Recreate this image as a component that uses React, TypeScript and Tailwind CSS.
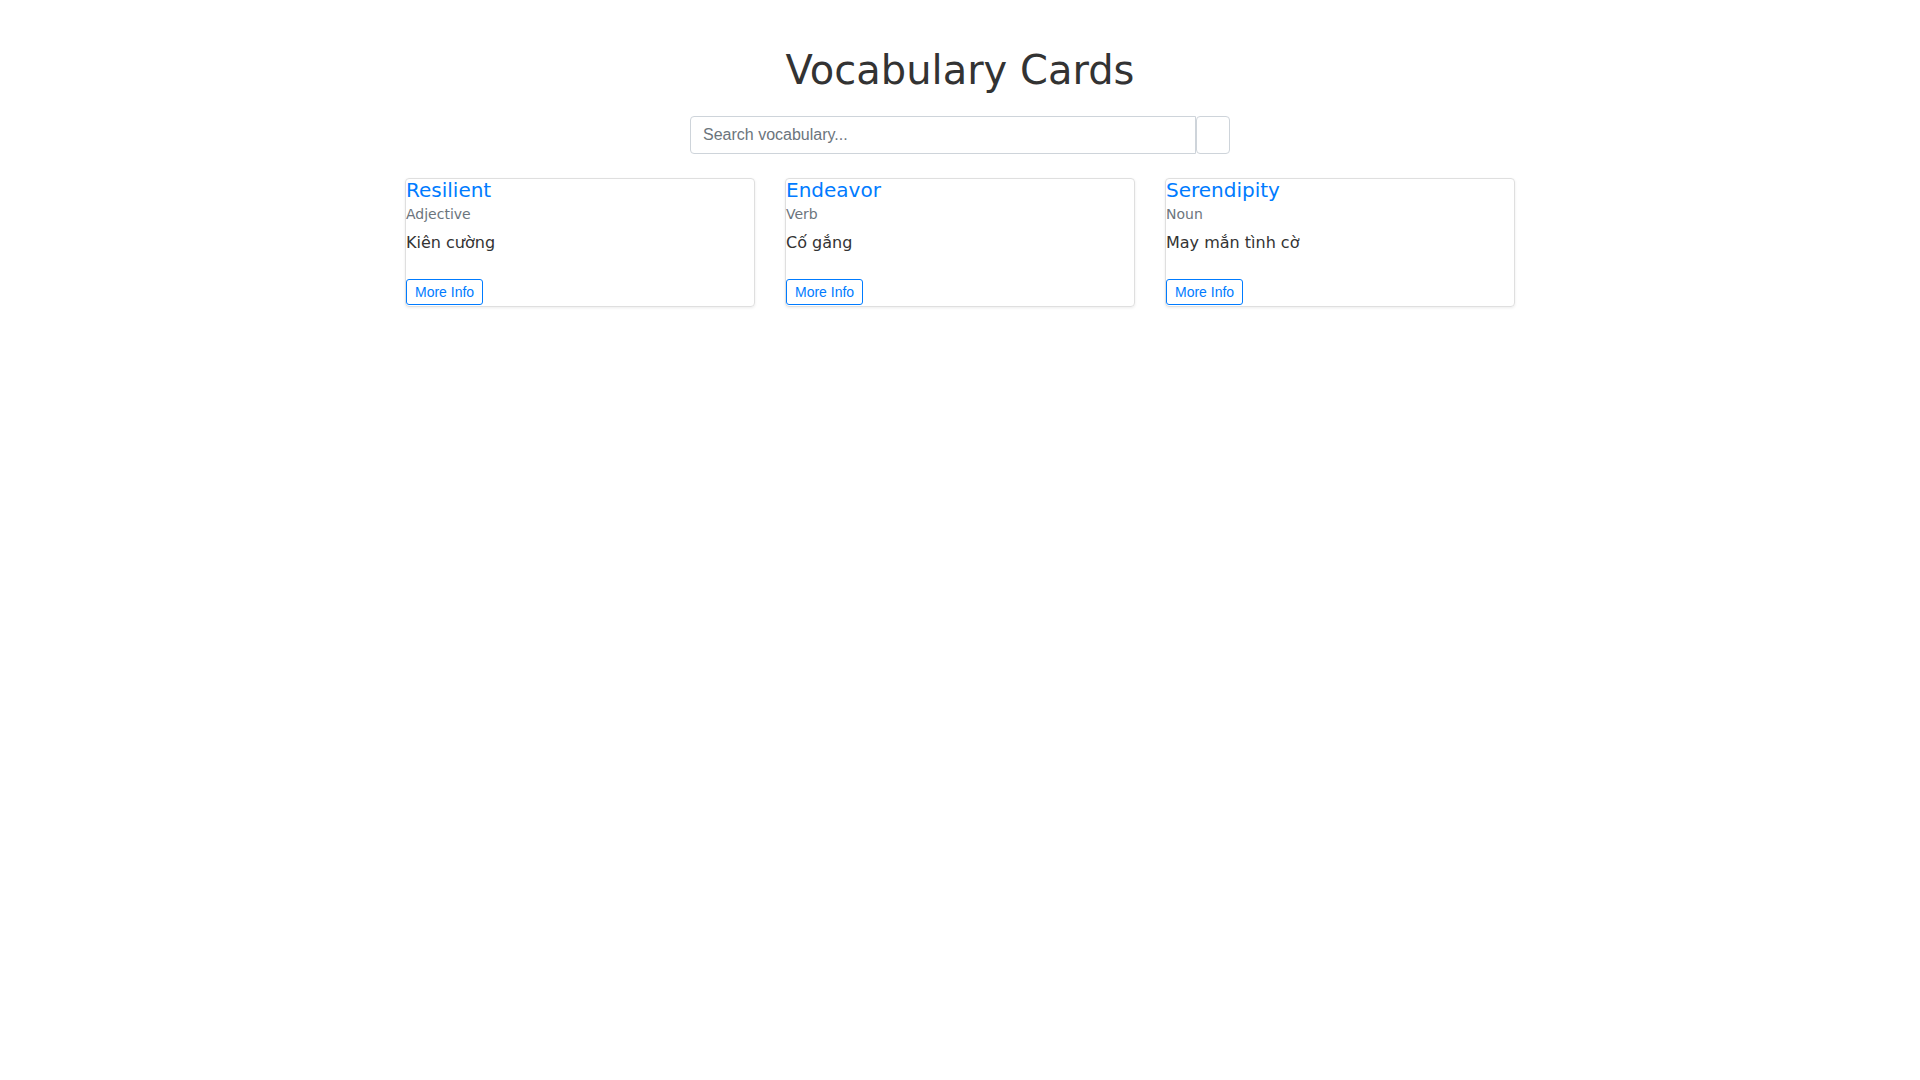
import React, { useState } from "react";

interface Word {
    word: string;
    type: string;
    meaning: string;
}

const WORDS: Word[] = [
    { word: "Resilient", type: "Adjective", meaning: "Kiên cường" },
    { word: "Endeavor", type: "Verb", meaning: "Cố gắng" },
    { word: "Serendipity", type: "Noun", meaning: "May mắn tình cờ" },
];

export default function App() {
    const [query, setQuery] = useState("");

    const filtered = WORDS.filter((w) => w.word.toLowerCase().includes(query.trim().toLowerCase()));

    return (
        <div className="min-h-screen bg-white text-[#333] font-['DejaVu_Sans',sans-serif]">
            <div className="w-[1140px] mx-auto px-[15px]">
                <h1 className="text-center text-[40px] leading-[48px] pt-[46px] mb-[22px]">Vocabulary Cards</h1>

                <div className="flex justify-center">
                    <input
                        type="text"
                        placeholder="Search vocabulary..."
                        value={query}
                        onChange={(e) => setQuery(e.target.value)}
                        className="w-[506px] h-[38px] px-[12px] border border-[#ced4da] rounded-l-[4px] text-[16px] font-['Liberation_Sans',Arial,sans-serif] placeholder:text-[#6c757d] outline-none"
                    />
                    <button className="w-[34px] h-[38px] border border-[#ced4da] rounded-[4px] bg-white" />
                </div>

                <div className="grid grid-cols-3 gap-x-[30px] mt-[24px]">
                    {filtered.map((w) => (
                        <div key={w.word} className="border border-[#dfdfdf] rounded-[4px] shadow-[0_1px_3px_rgba(0,0,0,0.08)]">
                            <h5 className="text-[20px] leading-[22px] text-[#007bff]">{w.word}</h5>
                            <h6 className="text-[14px] leading-[21px] text-[#6c757d] mt-[3px]">{w.type}</h6>
                            <p className="text-[16px] leading-[24px] mt-[6px]">{w.meaning}</p>
                            <button className="mt-[24px] mb-[1px] h-[26px] px-[8px] border border-[#007bff] rounded-[3px] text-[14px] text-[#007bff] font-['Liberation_Sans',Arial,sans-serif] block">
                                More Info
                            </button>
                        </div>
                    ))}
                </div>
            </div>
        </div>
    );
}
